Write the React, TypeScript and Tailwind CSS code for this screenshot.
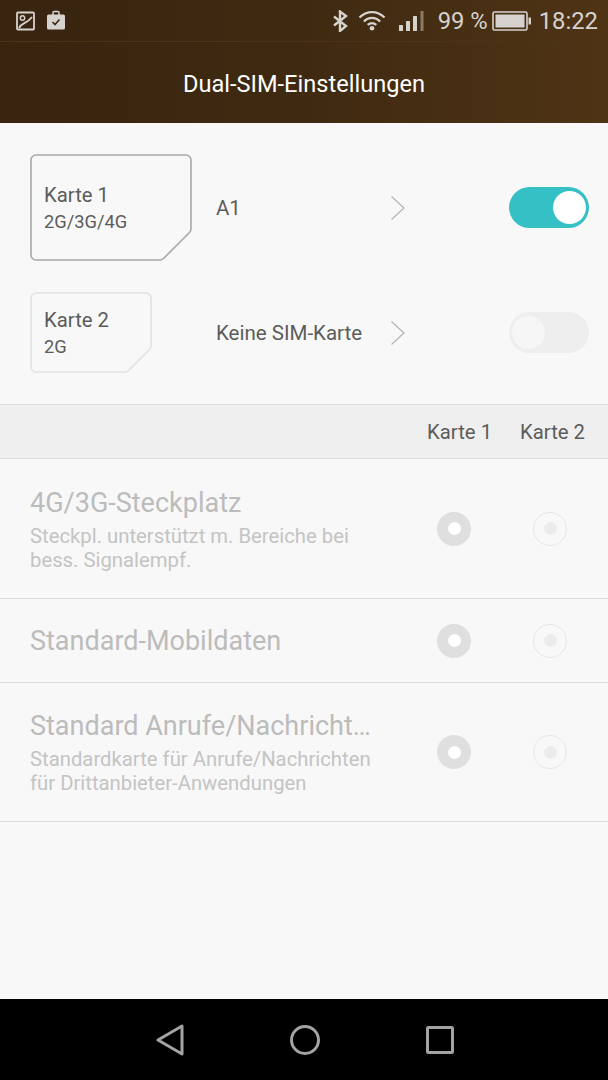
const font = { fontFamily: "Roboto, 'Noto Sans', sans-serif" };

function Sim({ w, h, cut, big, title, sub }: { w: number; h: number; cut: number; big: boolean; title: string; sub: string }) {
  const d = `M6 1H${w - 6}A5 5 0 0 1 ${w - 1} 6V${h - cut - 3}Q${w - 1} ${h - cut - 1} ${w - 2.5} ${h - cut + 0.5}L${w - cut + 0.5} ${h - 2.5}Q${w - cut - 1} ${h - 1} ${w - cut - 3} ${h - 1}H6A5 5 0 0 1 1 ${h - 6}V6A5 5 0 0 1 6 1Z`;
  return (
    <div className="relative shrink-0 flex flex-col justify-center pl-[14px] pt-[1px]" style={{ width: w, height: h }}>
      <svg className="absolute left-0 top-0" width={w} height={h} fill="none">
        <path d={d} stroke={big ? "#a8a8a8" : "#e2e2e2"} strokeWidth="1.6" />
      </svg>
      <div className="text-[20.3px] leading-[26px] text-[#5c5c5c]">{title}</div>
      <div className="text-[18.3px] leading-[26px] mt-[1px] text-[#5c5c5c]">{sub}</div>
    </div>
  );
}

function Chevron() {
  return (
    <svg width="14" height="24" viewBox="0 0 14 24" fill="none" className="shrink-0 -ml-[1px] mr-[1px]">
      <path d="M0.5 0.5L13 12L0.5 23.5" stroke="#b4b4b4" strokeWidth="1.2" />
    </svg>
  );
}

function Radio({ on }: { on: boolean }) {
  return on ? (
    <div className="w-[34px] h-[34px] rounded-full bg-[#dfdfdf] flex items-center justify-center">
      <div className="w-[13px] h-[13px] rounded-full bg-white" />
    </div>
  ) : (
    <div className="w-[34px] h-[34px] rounded-full border border-[#e6e6e6] flex items-center justify-center">
      <div className="w-[13px] h-[13px] rounded-full bg-[#ececec]" />
    </div>
  );
}

function Row({ title, sub, h }: { title: string; sub?: string[]; h: string }) {
  return (
    <div className={`${h} border-b border-[#dcdcdc] flex items-center pl-[30px]`}>
      <div className="flex-1 min-w-0 whitespace-nowrap">
        <div className="text-[27px] leading-[34px] text-[#bcbcbc]">{title}</div>
        {sub && (
          <div className="text-[20.3px] leading-[24px] text-[#c4c4c4] mt-[4px]">
            {sub.map((s) => (
              <div key={s}>{s}</div>
            ))}
          </div>
        )}
      </div>
      <div className="w-[108px] flex justify-center"><Radio on /></div>
      <div className="w-[84px] flex justify-center pr-[16px] box-content"><Radio on={false} /></div>
    </div>
  );
}

export default function App() {
  return (
    <div className="w-[608px] h-[1080px] flex flex-col bg-[#f8f8f8] overflow-hidden" style={font}>
      <header className="h-[123px] shrink-0 flex flex-col bg-gradient-to-r from-[#38240f] via-[#3f2a11] to-[#4f3315]">
        <div className="h-[42px] shrink-0 flex items-center pl-[16px] pr-[10px] text-[#d6d3cf] border-b border-[#4a3316]">
          <svg width="19" height="20" viewBox="0 0 19 20" fill="none" className="mr-[11px]">
            <rect x="1" y="1.5" width="17" height="17" rx="1" stroke="#d6d3cf" strokeWidth="1.8" />
            <circle cx="6.5" cy="7" r="2.2" stroke="#d6d3cf" strokeWidth="1.4" />
            <path d="M3 17C6 11 11 13 16 6" stroke="#d6d3cf" strokeWidth="1.8" />
          </svg>
          <svg width="20" height="20" viewBox="0 0 20 20" fill="none" className="-mt-[2px]">
            <path d="M7 5V2.5A1 1 0 0 1 8 1.5H12A1 1 0 0 1 13 2.5V5" stroke="#d6d3cf" strokeWidth="1.5" />
            <rect x="1" y="4.5" width="18" height="15" rx="1.5" fill="#d6d3cf" />
            <path d="M6.5 12L9 14.5L13.5 9.5" stroke="#3a2610" strokeWidth="1.6" />
          </svg>
          <div className="flex-1" />
          <svg width="16" height="22" viewBox="0 0 16 22" fill="none" className="mr-[10px]">
            <path d="M2 6.5L14 16L8 21V1.5L14 6L2 15.5" stroke="#d6d3cf" strokeWidth="2.4" />
          </svg>
          <svg width="28" height="21" viewBox="0 0 29 21" fill="none" className="mr-[13px]">
            <path d="M1.5 7.5C9 0 20 0 27.5 7.5" stroke="#d6d3cf" strokeWidth="2.2" />
            <path d="M6 11.5C11 6.5 18 6.5 23 11.5" stroke="#d6d3cf" strokeWidth="2.2" />
            <path d="M10 15C13 12.5 16 12.5 19 15" stroke="#d6d3cf" strokeWidth="2.2" />
            <circle cx="14.5" cy="18.5" r="2.4" fill="#d6d3cf" />
          </svg>
          <svg width="25" height="20" viewBox="0 0 25 20" className="mr-[14px]">
            <rect x="0" y="14" width="4" height="6" rx="0.5" fill="#d6d3cf" />
            <rect x="7" y="10" width="4" height="10" rx="0.5" fill="#d6d3cf" />
            <rect x="14" y="5" width="4" height="15" rx="0.5" fill="#d6d3cf" />
            <rect x="21.5" y="0" width="3" height="20" fill="#8a7a66" />
          </svg>
          <span className="text-[23.8px] leading-none mr-[4px] whitespace-nowrap pt-[3px]">99 %</span>
          <svg width="39" height="20" viewBox="0 0 39 20" fill="none" className="mr-[8px]">
            <rect x="1" y="1" width="34" height="18" rx="1.5" stroke="#d6d3cf" strokeWidth="1.6" />
            <rect x="3.5" y="3.5" width="29" height="13" fill="#d6d3cf" />
            <rect x="36.5" y="6.5" width="2.5" height="7" fill="#d6d3cf" />
          </svg>
          <span className="text-[23.8px] leading-none pt-[3px]">18:22</span>
        </div>
        <div className="flex-1 flex items-center justify-center text-white text-[23.6px] pt-[4px]">Dual-SIM-Einstellungen</div>
      </header>

      <section className="h-[281px] shrink-0 flex flex-col pt-[31px] pl-[30px] pr-[19px]">
        <div className="flex items-center">
          <Sim w={162} h={107} cut={29} big title="Karte 1" sub="2G/3G/4G" />
          <div className="ml-[24px] w-[176px] text-[20.5px] text-[#5c5c5c] pt-[2px]">A1</div>
          <Chevron />
          <div className="flex-1" />
          <div className="w-[80px] h-[41px] rounded-full bg-[#35c0c5] flex items-center justify-end pr-[3px]">
            <div className="w-[33px] h-[33px] rounded-full bg-white" />
          </div>
        </div>
        <div className="flex items-center mt-[31px]">
          <Sim w={122} h={81} cut={24} big={false} title="Karte 2" sub="2G" />
          <div className="ml-[64px] w-[176px] text-[20.5px] text-[#5c5c5c] whitespace-nowrap pt-[2px]">Keine SIM-Karte</div>
          <Chevron />
          <div className="flex-1" />
          <div className="w-[80px] h-[41px] rounded-full bg-[#eeeeee] flex items-center pl-[3px]">
            <div className="w-[33px] h-[33px] rounded-full bg-[#f6f6f6]" />
          </div>
        </div>
      </section>

      <div className="h-[55px] shrink-0 bg-[#efefef] border-y border-[#dcdcdc] flex items-center justify-end pr-[23px] pt-[1px] text-[20.3px] text-[#5c5c5c]">
        <span className="mr-[28px]">Karte 1</span>
        <span>Karte 2</span>
      </div>

      <Row h="h-[140px]" title="4G/3G-Steckplatz" sub={["Steckpl. unterstützt m. Bereiche bei", "bess. Signalempf."]} />
      <Row h="h-[84px]" title="Standard-Mobildaten" />
      <Row h="h-[139px]" title="Standard Anrufe/Nachricht…" sub={["Standardkarte für Anrufe/Nachrichten", "für Drittanbieter-Anwendungen"]} />

      <div className="flex-1" />

      <nav className="h-[81px] shrink-0 bg-black flex items-center justify-center gap-[106px] pl-[2px]">
        <svg width="28" height="32" viewBox="0 0 28 32" fill="none">
          <path d="M26 2V30L2 16Z" stroke="#a3a3a3" strokeWidth="3" strokeLinejoin="round" />
        </svg>
        <svg width="30" height="30" viewBox="0 0 30 30" fill="none">
          <circle cx="15" cy="15" r="13.5" stroke="#a3a3a3" strokeWidth="3" />
        </svg>
        <svg width="28" height="28" viewBox="0 0 28 28" fill="none">
          <rect x="1.5" y="1.5" width="25" height="25" rx="1" stroke="#a3a3a3" strokeWidth="3" />
        </svg>
      </nav>
    </div>
  );
}
